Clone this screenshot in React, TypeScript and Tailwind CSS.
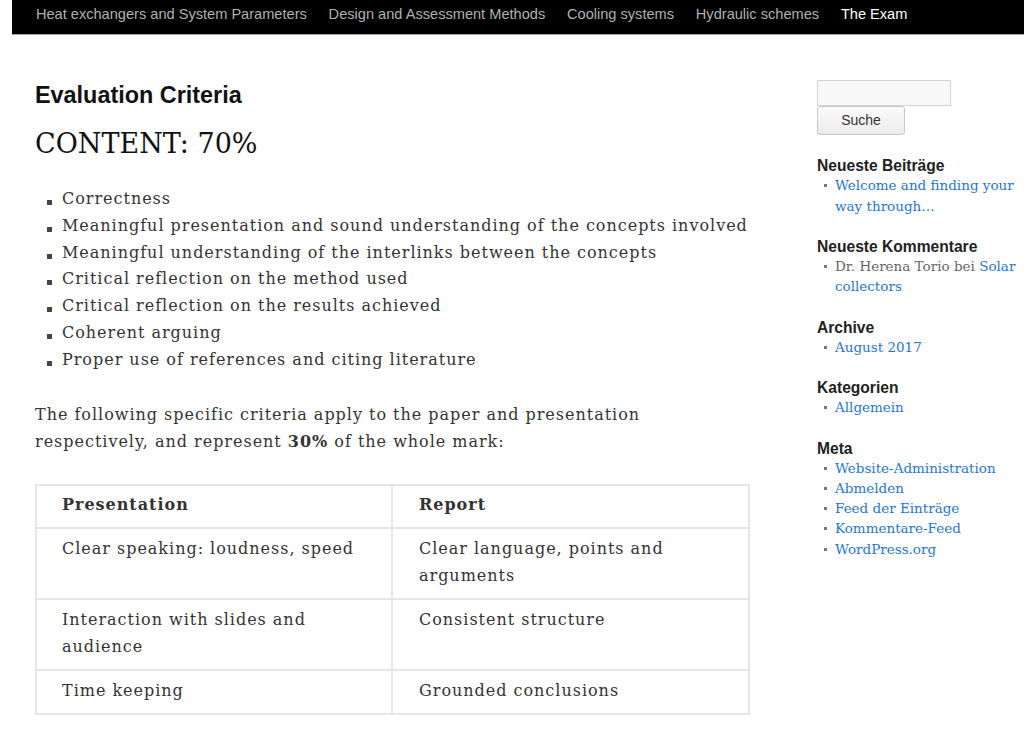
import React from "react";

const navItems = [
  "Heat exchangers and System Parameters",
  "Design and Assessment Methods",
  "Cooling systems",
  "Hydraulic schemes",
];

const criteria = [
  "Correctness",
  "Meaningful presentation and sound understanding of the concepts involved",
  "Meaningful understanding of the interlinks between the concepts",
  "Critical reflection on the method used",
  "Critical reflection on the results achieved",
  "Coherent arguing",
  "Proper use of references and citing literature",
];

const rows = [
  ["Clear speaking: loudness, speed", "Clear language, points and arguments"],
  ["Interaction with slides and audience", "Consistent structure"],
  ["Time keeping", "Grounded conclusions"],
];

const serif = "font-['DejaVu_Serif',serif]";
const sans = "font-['Liberation_Sans',Arial,sans-serif]";

const SideItem = ({ children }: { children: React.ReactNode }) => (
  <li className="flex">
    <span className="mt-[9px] ml-[7px] mr-[8px] h-[3px] w-[3px] shrink-0 bg-[#777]" />
    <span>{children}</span>
  </li>
);

const Widget = ({
  title,
  children,
}: {
  title: string;
  children: React.ReactNode;
}) => (
  <div className="mt-[22.3px]">
    <h3 className={`${sans} text-[15.6px] font-bold leading-[18px] text-[#222]`}>
      {title}
    </h3>
    <ul className={`${serif} text-[13.5px] leading-[20.2px]`}>{children}</ul>
  </div>
);

const Link = ({ children }: { children: React.ReactNode }) => (
  <a className="text-[#1f76d2]">{children}</a>
);

export default function App() {
  return (
    <div className="min-h-[749px] w-full overflow-hidden bg-white">
      <nav className="ml-[12px] flex h-[35px] border-b border-[#a0a0a0] bg-black pl-[13px]">
        {navItems.map((item) => (
          <a
            key={item}
            className={`${sans} px-[10.9px] text-[14.6px] leading-[29px] text-[#b0b0b0]`}
          >
            {item}
          </a>
        ))}
        <a className={`${sans} px-[10.9px] text-[14.6px] leading-[29px] text-white`}>
          The Exam
        </a>
      </nav>

      <div className="flex pt-[45px]">
        <main className="ml-[35px] w-[715px] shrink-0">
          <h1 className={`${sans} text-[23.4px] font-bold leading-[30px] text-[#111]`}>
            Evaluation Criteria
          </h1>
          <h2 className={`${serif} mt-[16px] text-[27px] leading-[36px] text-[#111]`}>
            CONTENT: 70%
          </h2>

          <ul
            className={`${serif} mt-[24px] text-[16px] leading-[26.8px] tracking-[0.98px] text-[#333]`}
          >
            {criteria.map((c) => (
              <li key={c} className="flex">
                <span className="mt-[14px] ml-[12px] mr-[10px] h-[5px] w-[5px] shrink-0 bg-[#444]" />
                <span>{c}</span>
              </li>
            ))}
          </ul>

          <p
            className={`${serif} mt-[27px] text-[16px] leading-[27px] tracking-[0.98px] text-[#333]`}
          >
            The following specific criteria apply to the paper and presentation
            respectively, and represent <strong className="font-bold">30%</strong> of the
            whole mark:
          </p>

          <table
            className={`${serif} mt-[29px] w-full table-fixed border-collapse border-2 border-[#e6e6e6] text-[16px] leading-[27px] tracking-[0.98px] text-[#333]`}
          >
            <thead>
              <tr>
                <th className="w-[356px] border-2 border-[#e6e6e6] px-[25px] pt-[5px] pb-[9px] text-left font-bold">
                  Presentation
                </th>
                <th className="border-2 border-[#e6e6e6] px-[26px] pt-[5px] pb-[9px] text-left font-bold">
                  Report
                </th>
              </tr>
            </thead>
            <tbody>
              {rows.map(([a, b]) => (
                <tr key={a}>
                  <td className="border-2 border-[#e6e6e6] px-[25px] pt-[6px] pb-[9px] align-top">
                    {a}
                  </td>
                  <td className="border-2 border-[#e6e6e6] px-[26px] pt-[6px] pb-[9px] align-top">
                    {b}
                  </td>
                </tr>
              ))}
            </tbody>
          </table>
        </main>

        <aside className="ml-[67px] w-[205px] shrink-0">
          <input
            className="block h-[26px] w-[134px] border border-[#d4d4d4] bg-[#f8f8f8]"
            type="text"
          />
          <button
            className={`${sans} block h-[29px] w-[88px] rounded-[3px] border border-[#c8c8c8] bg-gradient-to-b from-[#fbfbfb] to-[#ebebeb] text-[14px] text-[#333]`}
          >
            Suche
          </button>

          <Widget title="Neueste Beiträge">
            <SideItem>
              <Link>Welcome and finding your way through…</Link>
            </SideItem>
          </Widget>
          <Widget title="Neueste Kommentare">
            <SideItem>
              <span className="text-[#666]">Dr. Herena Torio bei </span>
              <Link>Solar collectors</Link>
            </SideItem>
          </Widget>
          <Widget title="Archive">
            <SideItem>
              <Link>August 2017</Link>
            </SideItem>
          </Widget>
          <Widget title="Kategorien">
            <SideItem>
              <Link>Allgemein</Link>
            </SideItem>
          </Widget>
          <Widget title="Meta">
            <SideItem>
              <Link>Website-Administration</Link>
            </SideItem>
            <SideItem>
              <Link>Abmelden</Link>
            </SideItem>
            <SideItem>
              <Link>Feed der Einträge</Link>
            </SideItem>
            <SideItem>
              <Link>Kommentare-Feed</Link>
            </SideItem>
            <SideItem>
              <Link>WordPress.org</Link>
            </SideItem>
          </Widget>
        </aside>
      </div>
    </div>
  );
}
